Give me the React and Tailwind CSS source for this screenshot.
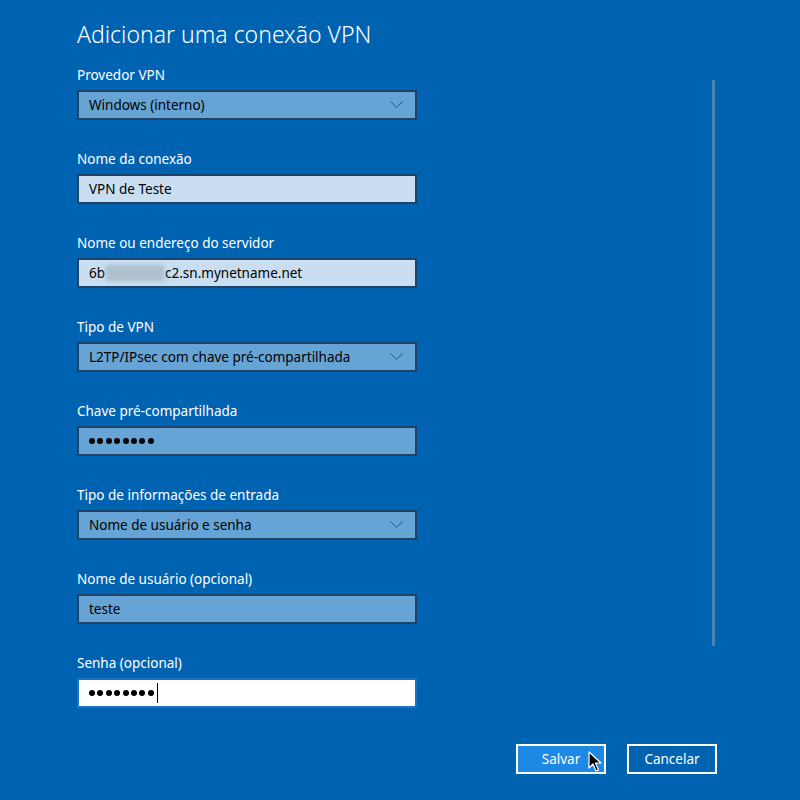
const font = { fontFamily: '"Noto Sans", "Open Sans", sans-serif' }

const Chevron = () => (
    <svg width="13" height="8" viewBox="0 0 13 8" className="mr-[4px]">
        <path d="M0.5 0.5 L6.5 6.5 L12.5 0.5" fill="none" stroke="#2f506e" strokeWidth="1" />
    </svg>
)

const Field = ({ label, children, variant = 'mid', select = false }) => {
    const box = {
        mid: 'bg-[#67a4d6] border-[#1d4468]',
        light: 'bg-[#c9def0] border-[#1d4468]',
        focus: 'bg-white border-[#1a74c2]',
    }[variant]

    return (
        <div className="mb-[28px]">
            <div className="text-[13.5px] leading-[20px] text-white mb-[5px] pt-[1px]">{label}</div>
            <div className={`w-[340px] h-[30px] border-2 ${box} flex items-center pl-[10px] pr-[8px] text-[13.5px] text-black`}>
                <div className="flex-1 flex items-center">{children}</div>
                {select && <Chevron />}
            </div>
        </div>
    )
}

const Dots = ({ caret }) => (
    <div className="flex items-center gap-[2.4px]">
        {[0, 1, 2, 3, 4, 5, 6, 7].map((i) => (
            <div key={i} className="w-[6px] h-[6px] rounded-full bg-black" />
        ))}
        {caret && <div className="w-[1px] h-[20px] bg-black ml-[1px]" />}
    </div>
)

export default function App() {
    return (
        <div className="w-[800px] h-[800px] bg-[#0063b1] relative overflow-hidden" style={font}>
            {/* scrollbar */}
            <div className="absolute left-[712px] top-[80px] w-[3px] h-[566px] bg-[#4c83b2]" />

            <div className="pl-[77px] pt-[18px]">
                <h1 className="text-[23px] leading-[32px] font-light text-white mb-[14px]">Adicionar uma conexão VPN</h1>

                <Field label="Provedor VPN" select>Windows (interno)</Field>
                <Field label="Nome da conexão" variant="light">VPN de Teste</Field>
                <Field label="Nome ou endereço do servidor" variant="light">
                    <span>6b</span>
                    <span className="inline-block w-[58px] h-[16px] bg-[#aebfcd] blur-[2px] mx-[1px]" />
                    <span>c2.sn.mynetname.net</span>
                </Field>
                <Field label="Tipo de VPN" select>L2TP/IPsec com chave pré-compartilhada</Field>
                <Field label="Chave pré-compartilhada"><Dots /></Field>
                <Field label="Tipo de informações de entrada" select>Nome de usuário e senha</Field>
                <Field label="Nome de usuário (opcional)">teste</Field>
                <Field label="Senha (opcional)" variant="focus"><Dots caret /></Field>
            </div>

            <div className="flex justify-end gap-[21px] pr-[83px] mt-[36px]">
                <button className="relative w-[90px] h-[30px] border-2 border-white bg-[#1e88e5] text-white text-[13.5px]">
                    Salvar
                    <svg className="absolute left-[70px] top-[5px]" width="14" height="22" viewBox="0 0 14 22">
                        <path d="M1 1 L1 17 L5 13 L8 20 L10.5 19 L7.5 12 L13 12 Z" fill="#000" stroke="#fff" strokeWidth="1.2" strokeLinejoin="round" />
                    </svg>
                </button>
                <button className="w-[90px] h-[30px] border-2 border-white bg-[#0063b1] text-white text-[13.5px]">
                    Cancelar
                </button>
            </div>
        </div>
    )
}
